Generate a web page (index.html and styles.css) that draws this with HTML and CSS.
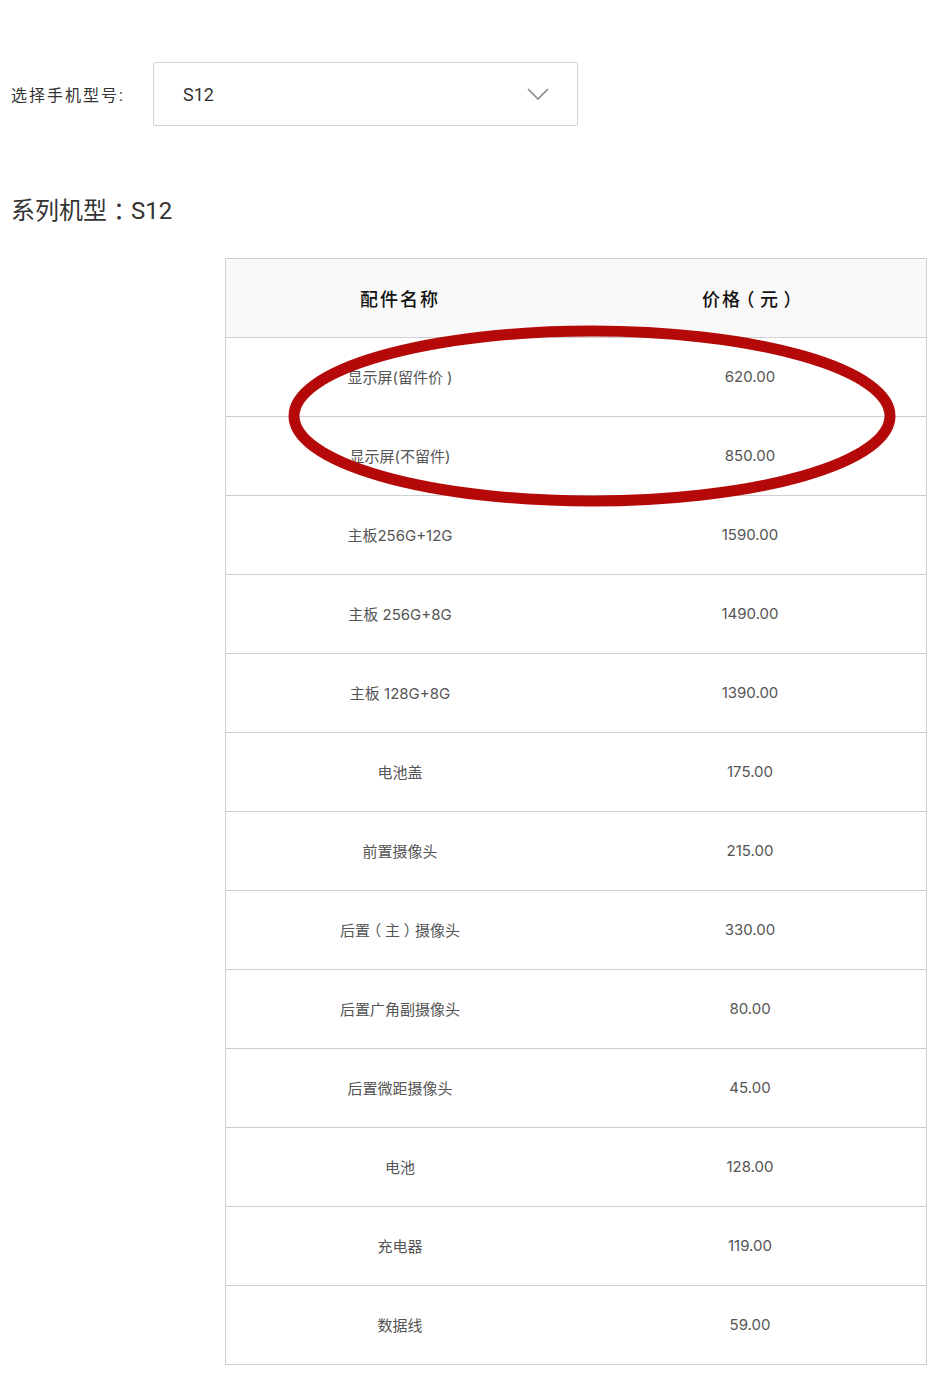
FILE: index.html
```html
<!DOCTYPE html>
<html lang="zh">
<head>
<meta charset="utf-8">
<link rel="stylesheet" href="styles.css">
</head>
<body>
<div class="page">
  <div class="picker">
    <span class="picker-label">选择手机型号:</span>
    <div class="select">
      <span class="select-value">S12</span>
      <svg class="chevron" width="22" height="12" viewBox="0 0 22 12"><path d="M1 1 L11 11 L21 1" fill="none" stroke="#888" stroke-width="1.6"/></svg>
    </div>
  </div>
  <h2 class="title">系列机型<span class="paren">：</span>S12</h2>
  <div class="table-wrap">
    <table class="parts">
      <thead>
        <tr><th>配件名称</th><th>价格<span class="paren">（</span>元<span class="paren">）</span></th></tr>
      </thead>
      <tbody>
        <tr><td>显示屏(留件价 )</td><td>620.00</td></tr>
        <tr><td>显示屏(不留件)</td><td>850.00</td></tr>
        <tr><td>主板256G+12G</td><td>1590.00</td></tr>
        <tr><td>主板 256G+8G</td><td>1490.00</td></tr>
        <tr><td>主板 128G+8G</td><td>1390.00</td></tr>
        <tr><td>电池盖</td><td>175.00</td></tr>
        <tr><td>前置摄像头</td><td>215.00</td></tr>
        <tr><td>后置<span class="paren">（</span>主<span class="paren">）</span>摄像头</td><td>330.00</td></tr>
        <tr><td>后置广角副摄像头</td><td>80.00</td></tr>
        <tr><td>后置微距摄像头</td><td>45.00</td></tr>
        <tr><td>电池</td><td>128.00</td></tr>
        <tr><td>充电器</td><td>119.00</td></tr>
        <tr><td>数据线</td><td>59.00</td></tr>
      </tbody>
    </table>
    <svg class="circle-mark" width="620" height="200" viewBox="0 0 620 200"><ellipse cx="310" cy="100" rx="298" ry="85" fill="none" stroke="#b50808" stroke-width="11"/></svg>
  </div>
</div>
</body>
</html>
```
FILE: styles.css
```css
html, body {
  margin: 0;
  padding: 0;
  background: #fff;
}
body {
  font-family: "Roboto", "Noto Sans CJK SC", sans-serif;
  color: #333;
}
.page {
  padding: 62px 0 0 11px;
}
.picker {
  display: flex;
  align-items: center;
}
.picker-label {
  font-size: 16px;
  letter-spacing: 2px;
  color: #333;
  width: 142px;
  padding-bottom: 1px;
}
.select {
  box-sizing: border-box;
  width: 425px;
  height: 64px;
  border: 1px solid #d4d4d4;
  border-radius: 2px;
  display: flex;
  align-items: center;
  justify-content: space-between;
  padding: 0 28px 0 29px;
}
.select-value {
  font-size: 18px;
  color: #333;
}
.chevron {
  display: block;
}
.title {
  margin: 68px 0 0 0;
  font-size: 24px;
  font-weight: 400;
  color: #333;
  line-height: 34px;
}
.table-wrap {
  position: relative;
  margin: 30px 0 0 214px;
  width: 702px;
}
.parts {
  width: 702px;
  border-collapse: collapse;
  table-layout: fixed;
  border: 1px solid #cfcfcf;
}
.parts th, .parts td {
  height: 78px;
  padding: 0;
  text-align: center;
  border-bottom: 1px solid #cfcfcf;
}
.parts th:first-child, .parts td:first-child {
  width: 348px;
}
.parts th {
  background: #f9f9f9;
  font-size: 18px;
  font-weight: 500;
  letter-spacing: 2px;
  color: #111;
}
.parts td {
  font-family: "Inter", "Noto Sans CJK SC", sans-serif;
  font-size: 15px;
  color: #555;
  height: 77px;
  padding-bottom: 1px;
}
.paren {
  display: inline-block;
  width: 1em;
  text-align: center;
  font-feature-settings: "halt";
}
.circle-mark {
  position: absolute;
  left: 57px;
  top: 58px;
}
```
